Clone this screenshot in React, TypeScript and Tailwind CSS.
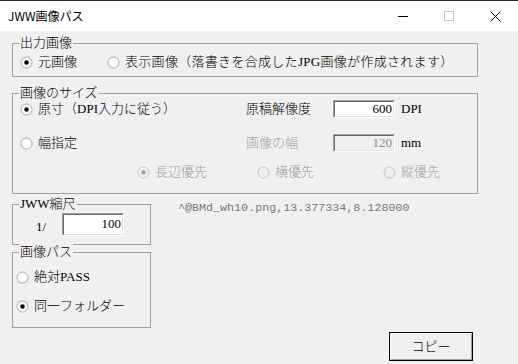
import React from "react";

const JP = '"Liberation Serif","Noto Sans CJK JP",serif';
const LAT: React.CSSProperties = { fontFamily: '"Liberation Serif",serif', fontWeight: 400 };

function Radio({ checked = false, disabled = false }: { checked?: boolean; disabled?: boolean }) {
  return (
    <svg width="13" height="13" viewBox="0 0 13 13" className="shrink-0">
      <circle cx="6.5" cy="6.5" r="5.5" fill={disabled ? "#f0f0f0" : "#ffffff"} stroke={disabled ? "#c4c4c4" : "#a8a8a8"} />
      {checked && <circle cx="6.5" cy="6.5" r="2.2" fill={disabled ? "#a0a0a0" : "#000000"} />}
    </svg>
  );
}

function L({ children, className = "" }: { children: React.ReactNode; className?: string }) {
  return (
    <span className={className} style={LAT}>
      {children}
    </span>
  );
}

function Group({ title, className, children }: { title: React.ReactNode; className: string; children: React.ReactNode }) {
  return (
    <div className={"relative border border-[#a0a0a0] " + className}>
      <span className="absolute left-[6px] top-[-9px] bg-[#f0f0f0] px-[1px] text-[13px] leading-[16px] text-black">{title}</span>
      {children}
    </div>
  );
}

function Field({ value, disabled = false, tall = false }: { value: string; disabled?: boolean; tall?: boolean }) {
  return (
    <div
      className={
        "w-[62px] border border-t-[#a0a0a0] border-l-[#a0a0a0] border-r-white border-b-white " +
        (tall ? "h-[23px]" : "h-[18px]")
      }
    >
      <div
        className={
          "flex h-full justify-end border border-t-[#696969] border-l-[#696969] border-r-[#e3e3e3] border-b-[#e3e3e3] pr-[1px] text-[13px] " +
          (disabled ? "bg-[#f0f0f0] text-[#8a8a8a] " : "bg-white text-black ") +
          (tall ? "items-start pt-[1px] leading-[16px]" : "items-center leading-[14px]")
        }
        style={LAT}
      >
        {value}
      </div>
    </div>
  );
}

export default function App() {
  return (
    <div className="h-[364px] w-[518px] overflow-hidden bg-[#f0f0f0] text-black" style={{ fontFamily: JP, fontWeight: 300 }}>
      {/* Title bar */}
      <div className="flex h-[31px] items-center border-t border-[#2a2a2a] bg-white">
        <span
          className="pl-[8px] text-[12px] leading-[16px] text-black"
          style={{ fontFamily: '"Noto Sans CJK JP",sans-serif', fontWeight: 400 }}
        >
          JWW画像パス
        </span>
        <div className="ml-auto flex h-full">
          <div className="flex h-full w-[46px] items-center justify-center">
            <svg width="10" height="10" viewBox="0 0 10 10">
              <line x1="0" y1="5.5" x2="10" y2="5.5" stroke="#000" strokeWidth="1" />
            </svg>
          </div>
          <div className="flex h-full w-[46px] items-center justify-center">
            <svg width="10" height="10" viewBox="0 0 10 10">
              <rect x="0.5" y="0.5" width="9" height="9" fill="none" stroke="#c6c6c6" strokeWidth="1" />
            </svg>
          </div>
          <div className="flex h-full w-[46px] items-center justify-center">
            <svg width="11" height="11" viewBox="0 0 11 11">
              <line x1="0.5" y1="0.5" x2="10.5" y2="10.5" stroke="#000" strokeWidth="1" />
              <line x1="10.5" y1="0.5" x2="0.5" y2="10.5" stroke="#000" strokeWidth="1" />
            </svg>
          </div>
        </div>
      </div>

      {/* Body */}
      <div className="flex flex-col pl-[12px] pt-[12px] text-[13px] leading-[16px]">
        {/* 出力画像 */}
        <Group title="出力画像" className="h-[34px] w-[466px] pl-[7px] pt-[8px]">
          <div className="flex h-[20px] items-center">
            <div className="flex w-[87px] items-center gap-[5px]">
              <Radio checked />
              <span>元画像</span>
            </div>
            <div className="flex items-center gap-[5px]">
              <Radio />
              <span className="tracking-[0.3px]">
                表示画像（落書きを合成した<L>JPG</L>画像が作成されます）
              </span>
            </div>
          </div>
        </Group>

        {/* 画像のサイズ */}
        <Group title="画像のサイズ" className="mt-[16px] h-[101px] w-[466px] pl-[7px] pt-[5px]">
          <div className="flex h-[20px] items-center">
            <div className="flex w-[226px] items-center gap-[5px]">
              <Radio checked />
              <span>
                原寸（<L>DPI</L>入力に従う）
              </span>
            </div>
            <span className="w-[87px]">原稿解像度</span>
            <Field value="600" />
            <L className="ml-[6px]">DPI</L>
          </div>
          <div className="mt-[14px] flex h-[20px] items-center">
            <div className="flex w-[226px] items-center gap-[5px]">
              <Radio />
              <span>幅指定</span>
            </div>
            <span className="w-[87px] text-[#a0a0a0]">画像の幅</span>
            <Field value="120" disabled />
            <L className="ml-[6px]">mm</L>
          </div>
          <div className="mt-[9px] flex h-[20px] items-center pl-[117px] text-[#a0a0a0]">
            <div className="flex w-[120px] items-center gap-[5px]">
              <Radio checked disabled />
              <span>長辺優先</span>
            </div>
            <div className="flex w-[126px] items-center gap-[5px]">
              <Radio disabled />
              <span>横優先</span>
            </div>
            <div className="flex items-center gap-[5px]">
              <Radio disabled />
              <span>縦優先</span>
            </div>
          </div>
        </Group>

        {/* Bottom area */}
        <div className="mt-[10px] flex">
          <div className="flex w-[139px] flex-col">
            <Group
              title={
                <>
                  <L>JWW</L>縮尺
                </>
              }
              className="h-[41px] w-[139px] pt-[8px]"
            >
              <div className="flex h-[23px] items-center pl-[23px]">
                <L className="w-[26px] pt-[4px]">1/</L>
                <Field value="100" tall />
              </div>
            </Group>
            <Group title="画像パス" className="mt-[7px] h-[76px] w-[139px] pl-[3px] pt-[14px]">
              <div className="flex h-[20px] items-center gap-[5px]">
                <Radio />
                <span>
                  絶対<L>PASS</L>
                </span>
              </div>
              <div className="mt-[9px] flex h-[20px] items-center gap-[5px]">
                <Radio checked />
                <span>同一フォルダー</span>
              </div>
            </Group>
          </div>
          <div
            className="ml-[27px] mt-[-3px] text-[11.7px] leading-[14px] text-[#7a7a7a]"
            style={{ fontFamily: '"Liberation Mono",monospace', fontWeight: 400 }}
          >
            ^@BMd_wh10.png,13.377334,8.128000
          </div>
        </div>

        <div className="mt-[4px] flex pl-[377px]">
          <div className="h-[29px] w-[84px] border border-black">
            <div className="flex h-full items-center justify-center border border-t-white border-l-white border-r-[#a0a0a0] border-b-[#a0a0a0] bg-[#f0f0f0] text-[13px]">
              コピー
            </div>
          </div>
        </div>
      </div>
    </div>
  );
}
